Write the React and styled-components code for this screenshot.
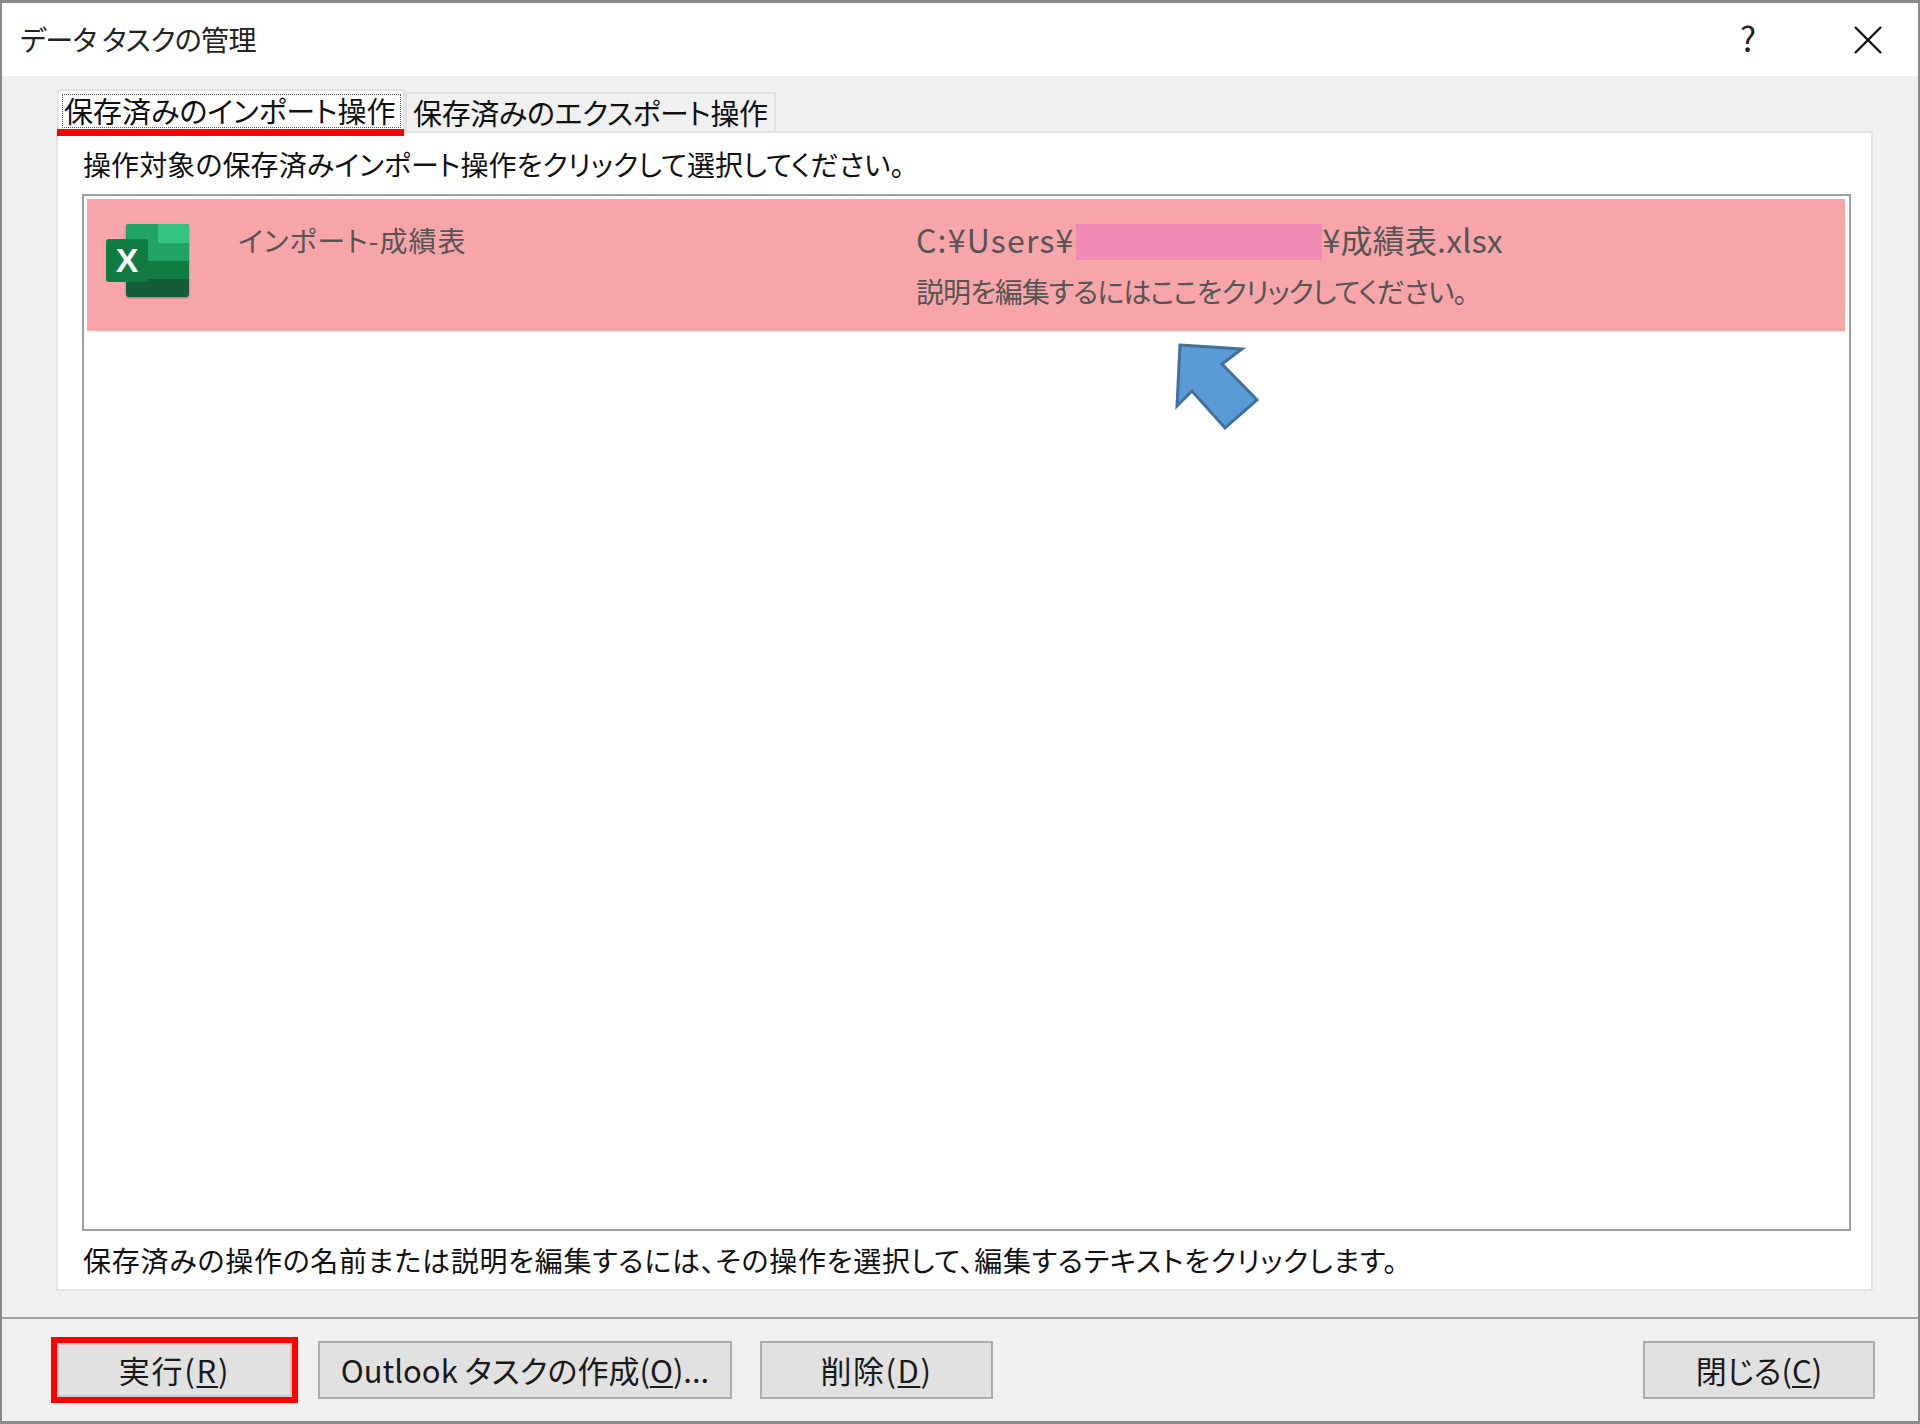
import React from "react";
import styled, { createGlobalStyle } from "styled-components";

const GlobalStyle = createGlobalStyle`
  html, body {
    margin: 0;
    padding: 0;
    background: #fff;
  }
  body {
    font-family: "Noto Sans CJK JP", "Noto Sans", sans-serif;
    font-feature-settings: "palt";
    color: #111;
  }
`;

function ExcelIcon() {
  return (
    <IconSvg viewBox="0 0 84 76" width="84" height="76">
      <defs>
        <filter id="soft" x="-10%" y="-10%" width="120%" height="125%">
          <feDropShadow dx="0" dy="1.5" stdDeviation="1.5" floodColor="#000" floodOpacity="0.3" />
        </filter>
      </defs>
      <g filter="url(#soft)">
        <rect x="20" y="1" width="63" height="73" rx="3" fill="#185c37" />
      </g>
      <path d="M23 1h29v19H20V4a3 3 0 0 1 3-3z" fill="#21a366" />
      <path d="M52 1h28a3 3 0 0 1 3 3v16H52z" fill="#33c481" />
      <rect x="20" y="20" width="32" height="18" fill="#21a366" />
      <rect x="52" y="20" width="31" height="18" fill="#21a366" />
      <rect x="20" y="38" width="63" height="18" fill="#107c41" />
      <rect x="0" y="16" width="42" height="43" rx="3" fill="#107c41" />
      <text x="21" y="49" textAnchor="middle" fontFamily="Liberation Sans" fontWeight="700" fontSize="34" fill="#fff">
        X
      </text>
    </IconSvg>
  );
}

function CloseIcon() {
  return (
    <svg viewBox="0 0 28 28" width="28" height="28">
      <path d="M1 1l26 26M27 1L1 27" stroke="#111" strokeWidth="2.4" fill="none" />
    </svg>
  );
}

function Arrow() {
  return (
    <ArrowSvg viewBox="0 0 90 92" width="90" height="92">
      <path
        d="M6 3 L68 7 L48 22 L83 58 L51 86 L18 49 L3 64 Z"
        fill="#5b9bd5"
        stroke="#41719c"
        strokeWidth="3"
      />
    </ArrowSvg>
  );
}

export default function App() {
  return (
    <>
      <GlobalStyle />
      <Window>
        <TitleBar>
          <Title>データ タスクの管理</Title>
          <Help>?</Help>
          <CloseButton>
            <CloseIcon />
          </CloseButton>
        </TitleBar>
        <Body>
          <Tabs>
            <Tab $active>
              <TabLabel $active>保存済みのインポート操作</TabLabel>
            </Tab>
            <Tab>
              <TabLabel>保存済みのエクスポート操作</TabLabel>
            </Tab>
          </Tabs>
          <Panel>
            <Hint>操作対象の保存済みインポート操作をクリックして選択してください。</Hint>
            <List>
              <Row>
                <ExcelIcon />
                <Name>インポート-成績表</Name>
                <Details>
                  <Path>
                    <PathHead>C:¥Users¥</PathHead>
                    <Redacted />¥成績表.xlsx
                  </Path>
                  <Description>説明を編集するにはここをクリックしてください。</Description>
                </Details>
              </Row>
              <Arrow />
            </List>
            <Note>保存済みの操作の名前または説明を編集するには、その操作を選択して、編集するテキストをクリックします。</Note>
          </Panel>
        </Body>
        <Footer>
          <Button $width={235} $marked $spacing={1.8}>
            実行(<u>R</u>)
          </Button>
          <Button $width={414}>
            Outlook タスクの作成(<u>O</u>)...
          </Button>
          <DeleteAction $width={233} $spacing={1.5}>
            削除(<u>D</u>)
          </DeleteAction>
          <CloseAction $width={232}>
            閉じる(<u>C</u>)
          </CloseAction>
        </Footer>
      </Window>
    </>
  );
}

const Window = styled.div`
  width: 1920px;
  height: 1424px;
  box-sizing: border-box;
  display: flex;
  flex-direction: column;
  border: 2px solid #8a8a8a;
  border-top-width: 3px;
  border-bottom-width: 3px;
  background: #f0f0f0;
  overflow: hidden;
`;

const TitleBar = styled.div`
  height: 73px;
  flex: none;
  display: flex;
  align-items: center;
  background: #fff;
  padding: 0 36px 0 18px;
`;

const Title = styled.div`
  flex: 1;
  font-size: 28px;
  letter-spacing: -0.65px;
  line-height: 1;
  color: #222;
  padding-bottom: 2px;
`;

const Help = styled.div`
  font-size: 34px;
  line-height: 1;
  margin-right: 98px;
  padding-bottom: 4px;
  color: #222;
`;

const CloseButton = styled.div`
  display: flex;
`;

const Body = styled.div`
  flex: 1;
  min-height: 0;
  display: flex;
  flex-direction: column;
  padding: 13px 45px 26px 54px;
`;

const Tabs = styled.div`
  flex: none;
  height: 42px;
  display: flex;
  align-items: flex-end;
  padding-left: 1px;
`;

const Tab = styled.div`
  box-sizing: border-box;
  position: relative;
  z-index: ${(p) => (p.$active ? 1 : 0)};
  height: ${(p) => (p.$active ? "42px" : "39px")};
  width: ${(p) => (p.$active ? "348px" : "371px")};
  padding: ${(p) => (p.$active ? "3px 2px 3px 3px" : "0 4px 0 6px")};
  display: flex;
  background: ${(p) => (p.$active ? "#fff" : "#f0f0f0")};
  border: 2px solid ${(p) => (p.$active ? "#e3e3e3" : "#e0e0e0")};
  border-bottom: none;

  ${(p) =>
    p.$active &&
    `
    &::after {
      content: "";
      position: absolute;
      left: -2px;
      right: -1px;
      bottom: -5px;
      height: 7px;
      background: #ff0000;
    }
  `}
`;

const TabLabel = styled.div`
  flex: 1;
  display: flex;
  align-items: center;
  padding-left: ${(p) => (p.$active ? "2px" : "0")};
  padding-bottom: ${(p) => (p.$active ? "2px" : "0")};
  font-size: 29px;
  letter-spacing: ${(p) => (p.$active ? "0" : "-0.35px")};
  white-space: nowrap;
  line-height: 1;
  outline: ${(p) => (p.$active ? "1px dotted #555" : "none")};
  outline-offset: -1px;
`;

const Panel = styled.div`
  flex: 1;
  min-height: 0;
  display: flex;
  flex-direction: column;
  box-sizing: border-box;
  background: #fff;
  border: 2px solid #e3e3e3;
  padding: 0 20px 0 24px;
`;

const Hint = styled.div`
  flex: none;
  height: 61px;
  display: flex;
  align-items: center;
  padding-left: 1px;
  font-size: 28px;
  letter-spacing: 0.1px;
  white-space: nowrap;
`;

const List = styled.div`
  flex: 1;
  min-height: 0;
  position: relative;
  box-sizing: border-box;
  border: 2px solid #a0a0a0;
  padding: 3px 4px 3px 3px;
`;

const Row = styled.div`
  height: 132px;
  display: grid;
  grid-template-columns: 151px 678px 1fr;
  background: #f8a5a9;
  color: #555;
`;

const IconSvg = styled.svg`
  margin: 24px 0 0 19px;
  display: block;
`;

const Name = styled.div`
  font-size: 28px;
  line-height: 1;
  padding-top: 27px;
  letter-spacing: 1px;
  white-space: nowrap;
`;

const Details = styled.div`
  display: flex;
  flex-direction: column;
`;

const Path = styled.div`
  display: flex;
  align-items: center;
  height: 36px;
  margin-top: 22px;
  font-size: 32px;
  letter-spacing: 0.2px;
  white-space: nowrap;
`;

const PathHead = styled.span`
  letter-spacing: 1.2px;
`;

const Redacted = styled.span`
  display: inline-block;
  width: 246px;
  height: 36px;
  margin: 6px 1px 0;
  background: #ee8ab3;
`;

const Description = styled.div`
  margin-top: 18px;
  font-size: 28px;
  line-height: 32px;
  letter-spacing: -1px;
  white-space: nowrap;
`;

const ArrowSvg = styled.svg`
  position: absolute;
  left: 1090px;
  top: 146px;
`;

const Note = styled.div`
  flex: none;
  height: 58px;
  display: flex;
  align-items: center;
  padding-left: 1px;
  font-size: 28px;
  letter-spacing: 0.75px;
  white-space: nowrap;
`;

const Footer = styled.div`
  flex: none;
  height: 104px;
  box-sizing: border-box;
  display: flex;
  align-items: flex-start;
  gap: 26px;
  padding: 22px 43px 0 55px;
  border-top: 2px solid #a0a0a0;
`;

const Button = styled.div`
  box-sizing: border-box;
  width: ${(p) => p.$width}px;
  height: ${(p) => (p.$marked ? "54px" : "58px")};
  margin-top: ${(p) => (p.$marked ? "2px" : "0")};
  padding-bottom: 1px;
  display: flex;
  align-items: center;
  justify-content: center;
  background: #e1e1e1;
  border: 2px solid ${(p) => (p.$marked ? "#c8c8c8" : "#adadad")};
  outline: ${(p) => (p.$marked ? "6px solid #ff0000" : "none")};
  font-size: 31px;
  letter-spacing: ${(p) => p.$spacing || 0}px;
  white-space: pre;
  line-height: 1;
  color: #1a1a1a;

  u {
    text-underline-offset: 3px;
    text-decoration-thickness: 2px;
  }
`;

const DeleteAction = styled(Button)`
  margin-left: 2px;
`;

const CloseAction = styled(Button)`
  margin-left: auto;
`;
